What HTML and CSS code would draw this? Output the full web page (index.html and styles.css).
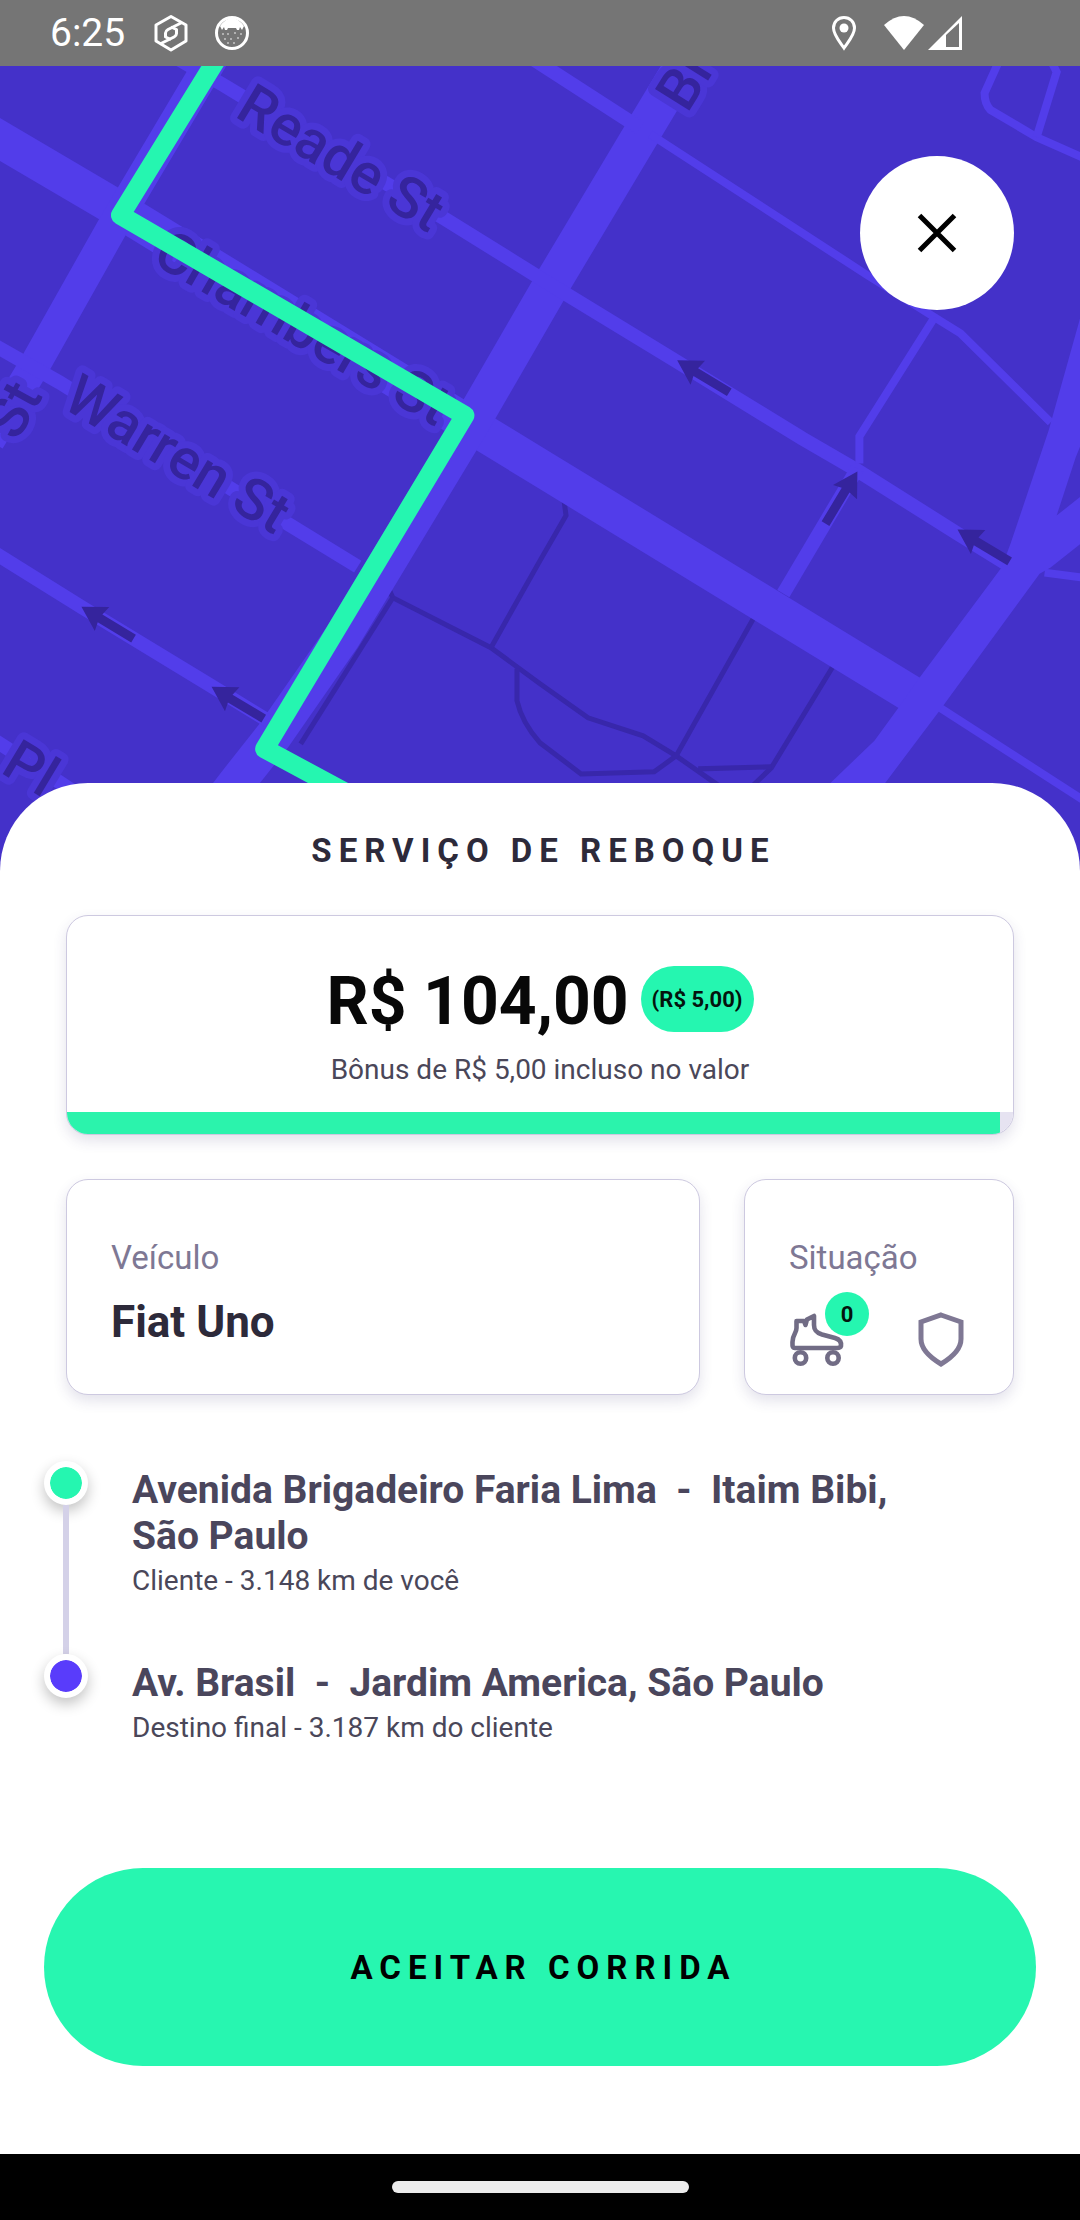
FILE: index.html
```html
<!DOCTYPE html>
<html lang="pt-BR">
<head>
    <meta charset="UTF-8">
    <meta name="viewport" content="width=device-width, initial-scale=1.0">
    <title>Serviço de Reboque</title>
    <link rel="stylesheet" href="styles.css">
</head>
<body>

    <div class="status-bar">
        <div class="status-left">
            <span class="clock">6:25</span>
            <svg class="status-icon hex-icon" width="36" height="38" viewBox="0 0 36 38" fill="none" stroke="#fff" stroke-width="3" stroke-linejoin="round">
                <path d="M18 2.500 L33 11 V27 L18 36 L3 27 V11 Z"/>
                <path d="M29 8.500 L15 15.500 Q12.500 17 12.500 19 V23 L18 25.500"/>
                <path d="M7 30 L21 23 Q23.500 21.500 23.500 19.500 V15.500 L18 13"/>
            </svg>
            <svg class="status-icon" width="36" height="38" viewBox="0 0 36 38">
                <circle cx="18" cy="19" r="15.500" fill="none" stroke="#fff" stroke-width="3"/>
                <path d="M6 12 Q18 -4 30 12 L28 16 L26 13 L25 16 H23 L22 14 H14 L13 16 H11 L10 13 L8 16 Z" fill="#fff"/>
                <g fill="#fff">
                    <circle cx="9" cy="20" r="0.800"/><circle cx="14" cy="20" r="0.800"/><circle cx="21" cy="19" r="0.800"/><circle cx="27" cy="20" r="0.800"/>
                    <circle cx="11" cy="25" r="0.800"/><circle cx="17" cy="25" r="0.800"/><circle cx="24" cy="24" r="0.800"/><circle cx="20" cy="29" r="0.800"/><circle cx="14" cy="29" r="0.800"/>
                </g>
            </svg>
        </div>
        <div class="status-right">
            <svg class="pin-icon" width="26" height="36" viewBox="0 0 26 36">
                <path d="M13 2.500 C7 2.500 2.500 7 2.500 13 C2.500 20 9 27 13 33 C17 27 23.500 20 23.500 13 C23.500 7 19 2.500 13 2.500 Z" fill="none" stroke="#fff" stroke-width="3"/>
                <circle cx="13" cy="13" r="4.500" fill="#fff"/>
            </svg>
            <svg width="42" height="36" viewBox="0 0 42 36">
                <path d="M1 10 Q21 -8 41 10 L21 35 Z" fill="#fff"/>
            </svg>
            <svg width="36" height="36" viewBox="0 0 36 36">
                <path d="M1 35 L35 1 V35 Z M19 20 V32 H32 V8 Z" fill="#fff" fill-rule="evenodd"/>
            </svg>
        </div>
    </div>

    <div class="map">
        <svg class="map-canvas" viewBox="0 66 1080 804" preserveAspectRatio="xMidYMin slice" aria-hidden="true">
            <defs>
                <path id="arrow" d="M0 0 L24 -14 L22 -4 H61 V5 H22 L24 14 Z"/>
            </defs>

            <!-- footpaths -->
            <g class="path">
                <path d="M386 582 L393 597 L491 647 L540 683 L588 717 L643 735 L676 755 L716 783 L740 800"/>
                <path d="M393 597 L301 743"/>
                <path d="M491 647 L540 560 L566 515 L564 500"/>
                <path d="M517 668 V700 Q522 722 540 742 L581 773 L654 771 L676 755 L753 618"/>
                <path d="M833 665 L771 767 L745 792"/>
                <path d="M698 768 L771 766"/>
            </g>

            <!-- streets -->
            <g class="street">
                <path class="wide" d="M-10 133 L107 202 L468 423 L540 467 L925 702"/>
                <path class="wide" d="M740 -30 L643 131 L554 280 L470 425 L342 637 L274 735 L236 783 L200 830"/>
                <path class="medium" d="M218 50 L114 225 L38 360 L-10 440"/>
                <path d="M170 54 L222 84 L444 218 L550 284 L678 362 L802 438 L857 470 L957 533 L1020 572"/>
                <path d="M530 57 L640 128"/>
                <path d="M-10 342 L60 382 L286 522 L358 566"/>
                <path d="M-10 549 L83 607 L213 686 L275 724"/>
                <path d="M-10 736 L55 778 L100 808"/>
                <path d="M783 593 L857 468"/>
                <path class="small" d="M650 134 L867 275 L939 320 L960 333 L1050 422"/>
                <path class="small" d="M934 317 L859 436 V463"/>
                <path class="small" d="M998 62 L984 93 Q984 104 990 110 L1036 137 L1090 161"/>
                <path class="small" d="M1050 60 L1056 72 L1036 137"/>
                <path class="small" d="M935 704 L1090 804"/>
                <path class="small" d="M1044 572 L1090 578"/>
                <path class="area" d="M1090 280 L1048 430 L1010 543 L1001 567 L919 677 L898 707 L874 740 L829 783 L770 840 L850 840 L884 783 L939 710 L1039 573 L1050 567 L1090 535 V488 L1056 515 L1075 457 L1090 420 Z"/>
            </g>

            <g class="arrows">
                <use href="#arrow" transform="translate(82 606) rotate(31)"/>
                <use href="#arrow" transform="translate(212 686) rotate(31)"/>
                <use href="#arrow" transform="translate(677 360) rotate(31)"/>
                <use href="#arrow" transform="translate(957 529) rotate(31)"/>
                <use href="#arrow" transform="translate(857 471) rotate(121)"/>
            </g>

            <g class="street-name">
                <text transform="translate(234 116) rotate(31)">Reade St</text>
                <text transform="translate(151 262) rotate(30)">Chambers St</text>
                <text transform="translate(61 406) rotate(31)">Warren St</text>
                <text transform="translate(0 771) rotate(31)">Pl</text>
                <text transform="translate(687 114) rotate(-58)">Br</text>
                <text transform="translate(18 442) rotate(-61)">St</text>
            </g>

            <path class="route-line" d="M224 48 L121 215 L465 415 L265 748 L380 810"/>
        </svg>

        <button class="close-button" type="button" aria-label="Fechar">
            <svg width="40" height="40" viewBox="0 0 40 40" stroke="#000" stroke-width="5">
                <path d="M2.500 2.500 L37.500 37.500 M37.500 2.500 L2.500 37.500"/>
            </svg>
        </button>
    </div>

    <main class="sheet">
        <h1 class="title">SERVIÇO DE REBOQUE</h1>

        <section class="card price-card">
            <div class="price-row">
                <strong class="price">R$ 104,00</strong>
                <span class="bonus-pill">(R$ 5,00)</span>
            </div>
            <p class="small-text">Bônus de R$ 5,00 incluso no valor</p>
            <div class="timer">
                <div class="timer-fill" style="width: 98.600%"></div>
            </div>
        </section>

        <div class="info-row">
            <section class="card info-card">
                <h2 class="label">Veículo</h2>
                <p class="vehicle">Fiat Uno</p>
            </section>
            <section class="card info-card">
                <h2 class="label">Situação</h2>
                <div class="situation">
                    <div class="skate">
                        <svg width="56" height="56" viewBox="0 0 56 56" fill="none" stroke="#716c85" stroke-width="4.600" stroke-linejoin="round" stroke-linecap="round">
                            <path d="M7.500 9 H15 L16.500 13 L18 7.500 L25 4 V13 C25 19 28 21 33 22.500 L46 26 C51 27.500 52.500 30 52 34 C51.500 36 50 36 48 36 H6 C3 36 3.500 33 3.500 30 C3.500 22 7.500 22 7.500 16 Z"/>
                            <circle cx="11.500" cy="46" r="5.700"/>
                            <circle cx="44" cy="46" r="5.700"/>
                        </svg>
                        <span class="count">0</span>
                    </div>
                    <svg width="56" height="56" viewBox="0 0 56 56" fill="none" stroke="#7f7894" stroke-width="5">
                        <path d="M28 3 L48 10 V27 C48 38 38 46 28 52 C18 46 8 38 8 27 V10 Z"/>
                    </svg>
                </div>
            </section>
        </div>

        <ol class="stops">
            <li class="stop">
                <div class="marker">
                    <span class="dot"></span>
                    <span class="line"></span>
                </div>
                <div class="stop-text">
                    <h3 class="address">Avenida Brigadeiro Faria Lima  -  Itaim Bibi, São Paulo</h3>
                    <p class="small-text">Cliente - 3.148 km de você</p>
                </div>
            </li>
            <li class="stop">
                <div class="marker">
                    <span class="dot dot-final"></span>
                </div>
                <div class="stop-text">
                    <h3 class="address">Av. Brasil  -  Jardim America, São Paulo</h3>
                    <p class="small-text">Destino final - 3.187 km do cliente</p>
                </div>
            </li>
        </ol>

        <button class="accept-button" type="button">ACEITAR CORRIDA</button>
    </main>

    <div class="nav-bar">
        <div class="nav-handle"></div>
    </div>

</body>
</html>
```

FILE: styles.css
```css
* {
    box-sizing: border-box;
}

body {
    font-family: Roboto, "Liberation Sans", sans-serif;
    margin: 0;
    min-height: 100vh;
    display: flex;
    flex-direction: column;
    background-color: #fff;
}

h1, h2, h3, p, ol {
    margin: 0;
    padding: 0;
}

svg {
    display: block;
    flex: none;
}

/* status bar */
.status-bar {
    height: 66px;
    padding: 0 117px 0 50px;
    background-color: #757575;
    color: #fff;
    display: flex;
    justify-content: space-between;
    align-items: center;
}

.status-left, .status-right {
    display: flex;
    align-items: center;
}

.clock {
    font-size: 39px;
    line-height: 46px;
}

.status-icon {
    margin-left: 25px;
}

.hex-icon {
    margin-left: 28px;
}

.status-right {
    gap: 2px;
}

.pin-icon {
    margin-right: 24px;
}

/* map */
.map {
    position: relative;
    height: 805px;
    overflow: hidden;
    background-color: #4431c9;
}

.map-canvas {
    width: 100%;
    height: 100%;
}

.street path {
    fill: none;
    stroke: #523dea;
    stroke-width: 14px;
}

.street .wide {
    stroke-width: 37px;
}

.street .medium {
    stroke-width: 31px;
}

.street .small {
    stroke-width: 8px;
}

.street .area {
    fill: #523dea;
    stroke: none;
}

.path path {
    fill: none;
    stroke: #3827ab;
    stroke-width: 5px;
}

.arrows {
    fill: #35249d;
}

.street-name {
    font-size: 57px;
    font-weight: 500;
    fill: #35249d;
    stroke: #4a36d6;
    stroke-width: 14px;
    stroke-linejoin: round;
    paint-order: stroke;
}

.route-line {
    fill: none;
    stroke: #25f6b0;
    stroke-width: 19px;
    stroke-linejoin: round;
}

.close-button {
    position: absolute;
    top: 90px;
    right: 66px;
    width: 154px;
    height: 154px;
    padding: 0;
    border: none;
    border-radius: 50%;
    background-color: #fff;
    display: flex;
    justify-content: center;
    align-items: center;
    cursor: pointer;
}

/* bottom sheet */
.sheet {
    position: relative;
    flex: 1;
    margin-top: -88px;
    padding: 48px 44px 88px;
    border-radius: 88px 88px 0 0;
    background-color: #fff;
    display: flex;
    flex-direction: column;
}

.title {
    font-size: 33px;
    line-height: 40px;
    font-weight: 700;
    letter-spacing: 7px;
    text-indent: 7px;
    text-align: center;
    color: #2d2a3a;
}

.card {
    border: 1px solid #cdc9e0;
    border-radius: 22px;
    background-color: #fff;
    box-shadow: 0 6px 14px rgba(60, 50, 110, 0.14);
}

.price-card {
    margin: 44px 22px 0;
    padding-top: 50px;
    overflow: hidden;
    text-align: center;
}

.price-row {
    display: flex;
    justify-content: center;
    gap: 12px;
    margin-bottom: 14px;
}

.price {
    font-size: 66px;
    line-height: 72px;
    font-weight: 700;
    color: #080808;
}

.bonus-pill {
    height: 66px;
    padding: 0 11px;
    border-radius: 33px;
    background-color: #25f6b0;
    font-size: 22px;
    line-height: 68px;
    font-weight: 700;
    color: #04140e;
}

.small-text {
    font-size: 28px;
    line-height: 36px;
    color: #4a4759;
}

.timer {
    height: 22px;
    margin-top: 24px;
    background-color: #e6e3f1;
}

.timer-fill {
    height: 100%;
    background-color: #2bf3ac;
}

.info-row {
    display: grid;
    grid-template-columns: 1fr 270px;
    gap: 44px;
    margin: 44px 22px 0;
}

.info-card {
    padding: 58px 44px 26px;
}

.label {
    font-size: 33px;
    line-height: 40px;
    font-weight: 400;
    color: #7e7894;
}

.vehicle {
    margin-top: 18px;
    font-size: 44px;
    line-height: 52px;
    font-weight: 700;
    color: #2d2a3a;
}

.situation {
    display: flex;
    justify-content: space-between;
    margin-top: 34px;
}

.skate {
    position: relative;
}

.count {
    position: absolute;
    top: -20px;
    left: 36px;
    width: 44px;
    height: 44px;
    border-radius: 50%;
    background-color: #25f6b0;
    font-size: 22px;
    line-height: 46px;
    font-weight: 700;
    text-align: center;
    color: #04140e;
}

/* pickup and destination */
.stops {
    margin-top: 66px;
    list-style: none;
}

.stop {
    display: flex;
    gap: 44px;
}

.marker {
    display: flex;
    flex-direction: column;
    align-items: center;
}

.dot {
    width: 44px;
    height: 44px;
    border: 6px solid #fff;
    border-radius: 50%;
    background-color: #25f6b0;
    background-clip: padding-box;
    box-shadow: 0 6px 14px rgba(0, 0, 0, 0.24);
}

.dot-final {
    background-color: #593cfb;
}

.line {
    flex: 1;
    width: 6px;
    background-color: #d4d1e8;
}

.stop-text {
    flex: 1;
    padding: 6px 110px 0 0;
}

.stop:first-child .stop-text {
    padding-bottom: 55px;
}

.address {
    margin-bottom: 4px;
    font-size: 39px;
    line-height: 46px;
    font-weight: 700;
    white-space: pre-wrap;
    color: #4a465c;
}

.accept-button {
    height: 198px;
    margin-top: auto;
    border: none;
    border-radius: 99px;
    background-color: #27f6b0;
    font-family: inherit;
    font-size: 33px;
    font-weight: 700;
    letter-spacing: 7px;
    text-indent: 7px;
    color: #000;
    cursor: pointer;
}

/* gesture bar */
.nav-bar {
    height: 66px;
    background-color: #000;
    display: flex;
    justify-content: center;
    align-items: center;
}

.nav-handle {
    width: 27.5%;
    height: 12px;
    border-radius: 6px;
    background-color: #ececec;
}
```
